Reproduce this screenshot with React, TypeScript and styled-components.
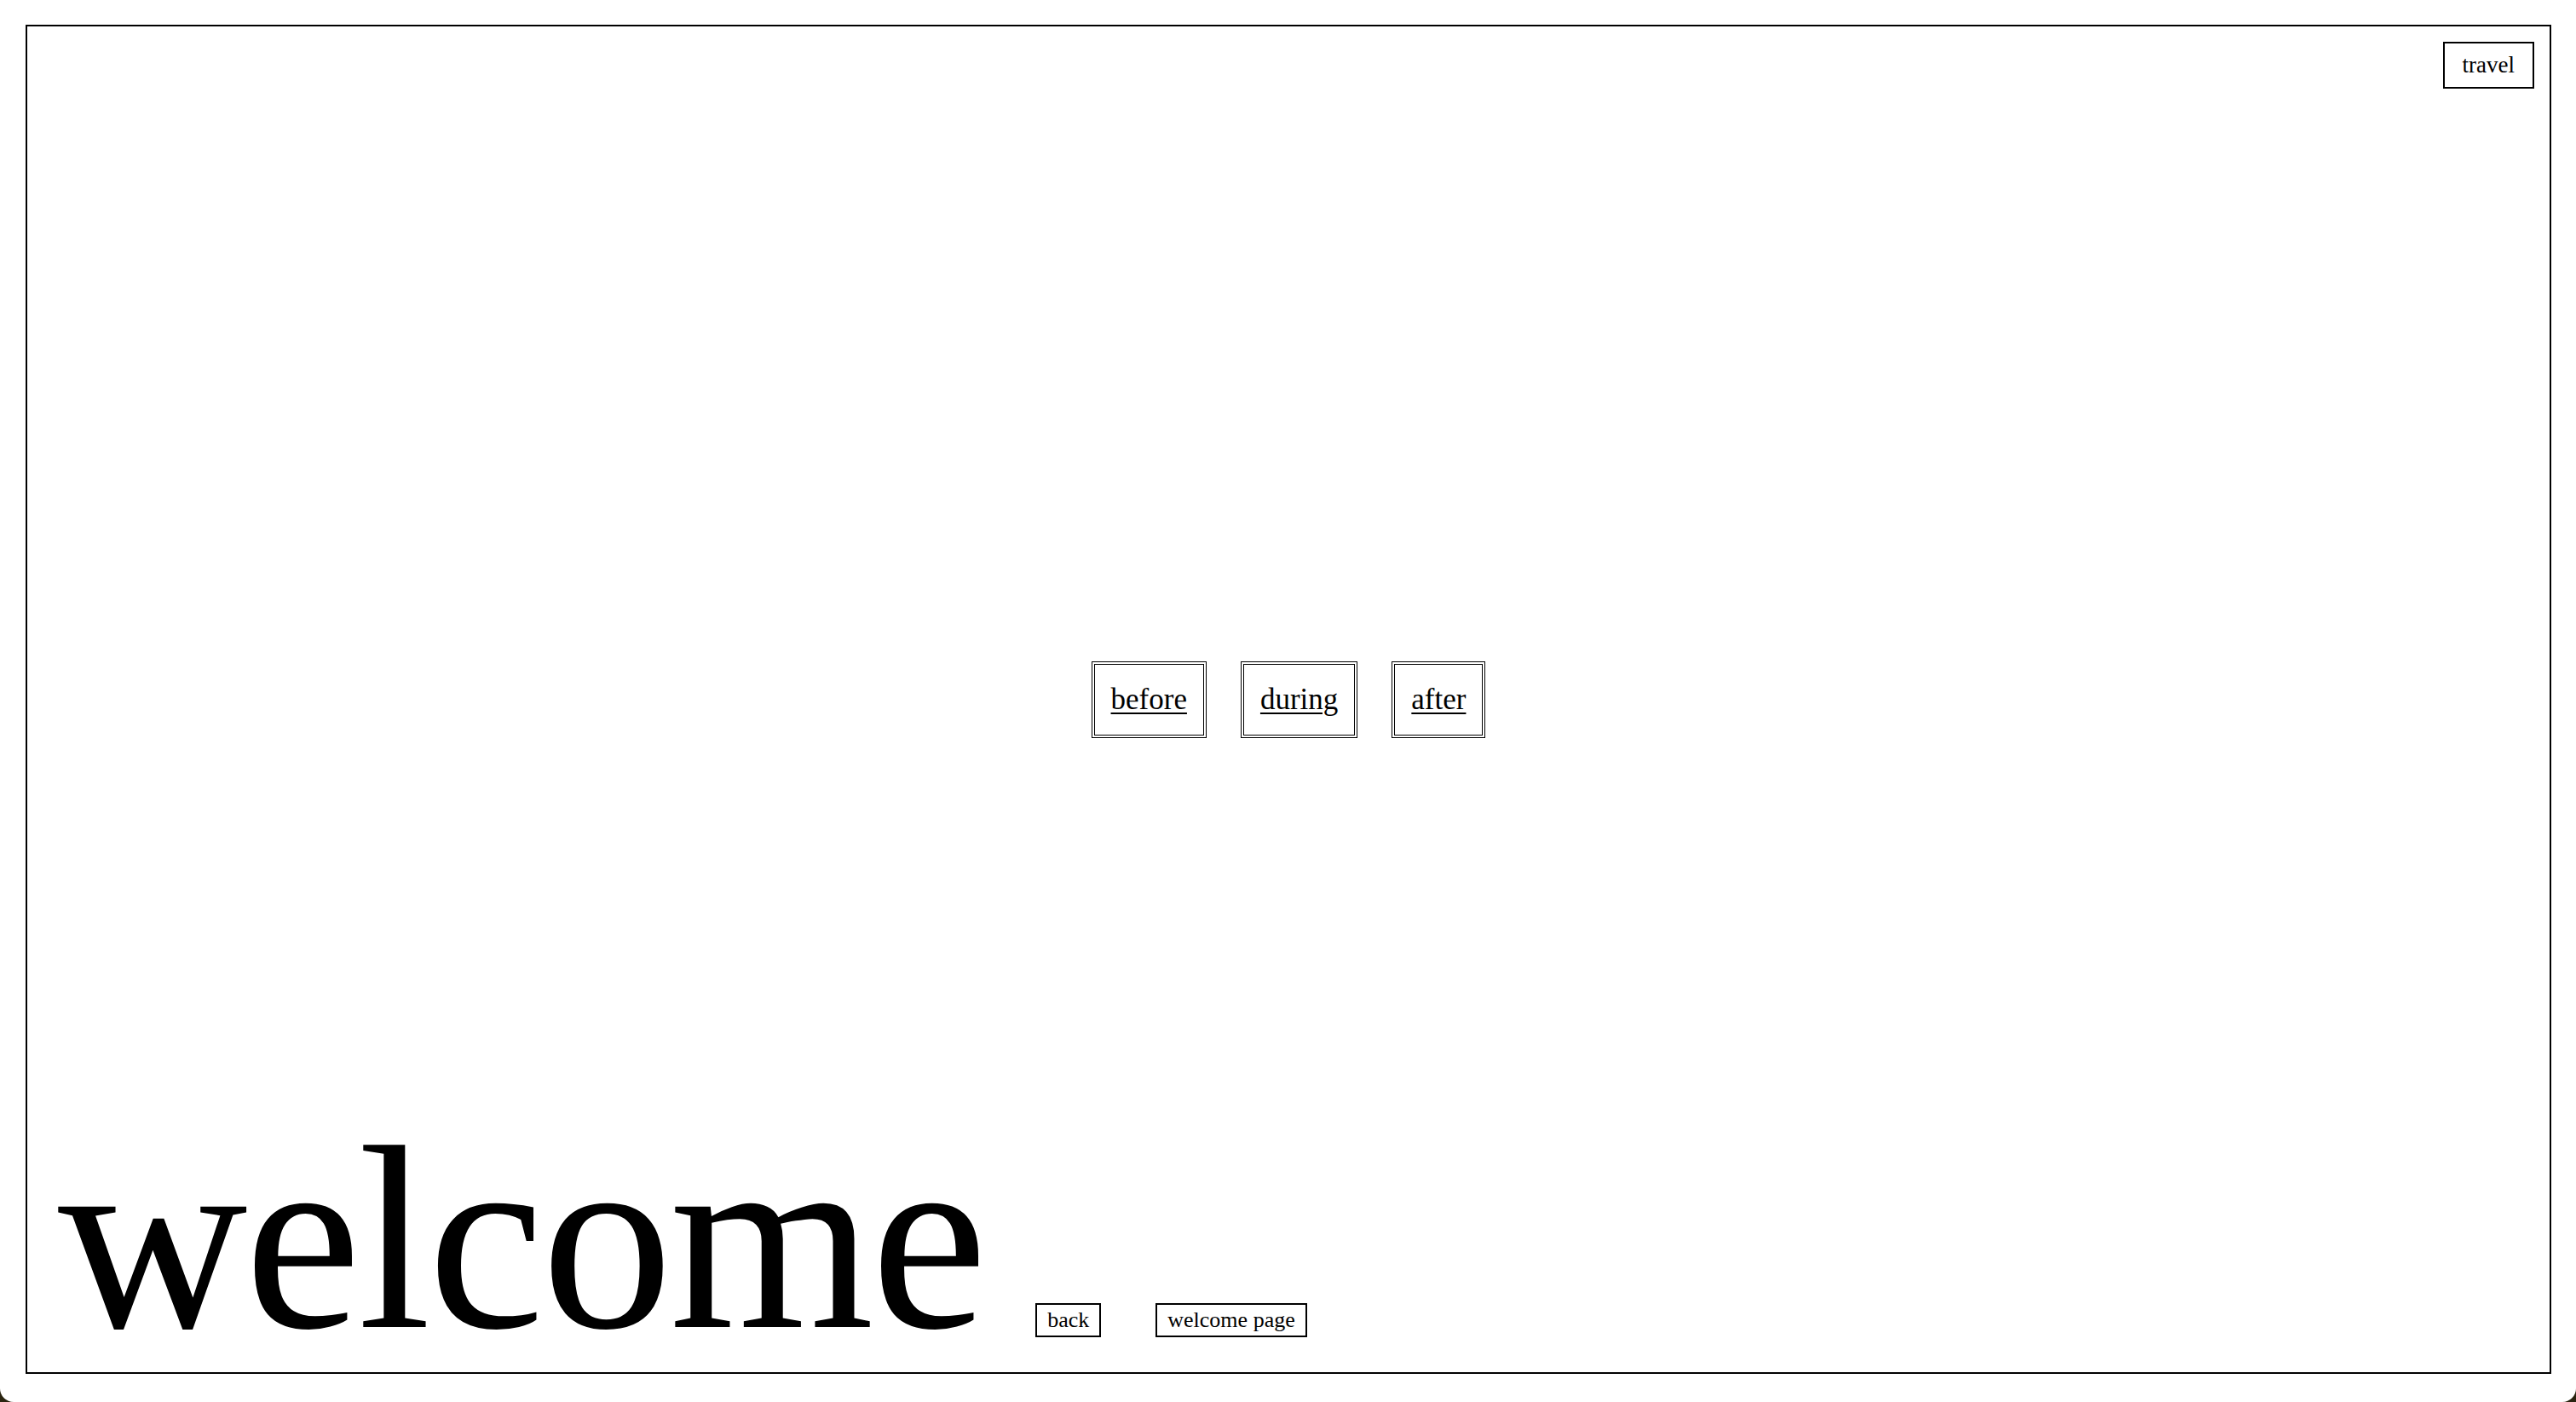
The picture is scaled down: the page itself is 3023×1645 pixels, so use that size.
import React from "react";
import styled, { createGlobalStyle } from "styled-components";

const GlobalStyle = createGlobalStyle`
  html {
    background: #2a2410;
  }
  body {
    margin: 0;
    background: #ffffff;
    border-radius: 0 0 16px 16px;
    font-family: "Liberation Serif", "Times New Roman", serif;
    color: #000000;
  }
`;

const navItems = ["before", "during", "after"];

const App: React.FC = () => {
  return (
    <>
      <GlobalStyle />
      <Page>
        <Frame>
          <TopBar>
            <TravelButton>travel</TravelButton>
          </TopBar>
          <Nav>
            {navItems.map(item => (
              <NavButton key={item} href="#">
                {item}
              </NavButton>
            ))}
          </Nav>
          <BottomRow>
            <Title>welcome</Title>
            <SmallButtons>
              <SmallButton>back</SmallButton>
              <SmallButton>welcome page</SmallButton>
            </SmallButtons>
          </BottomRow>
        </Frame>
      </Page>
    </>
  );
};

const Page = styled.div`
  box-sizing: border-box;
  height: 100vh;
  padding: 29px 29px 33px 30px;
  display: flex;
`;

const Frame = styled.main`
  flex: 1;
  border: 2px solid #000;
  display: grid;
  grid-template-rows: 1fr auto 1fr;
  min-height: 0;
`;

const TopBar = styled.header`
  display: flex;
  justify-content: flex-end;
  align-items: flex-start;
  padding: 18px 18px 0 0;
`;

const TravelButton = styled.div`
  border: 2px solid #000;
  padding: 10px 21px;
  font-size: 27px;
`;

const Nav = styled.nav`
  display: flex;
  justify-content: center;
  gap: 40px;
`;

const NavButton = styled.a`
  border: 4px double #000;
  padding: 21px 19px;
  font-size: 35px;
  color: #000;
  text-decoration: underline;
  text-decoration-thickness: 2px;
  text-underline-offset: 4px;
`;

const BottomRow = styled.footer`
  align-self: end;
  display: flex;
  align-items: baseline;
  padding: 0 0 41px 36px;
`;

const Title = styled.h1`
  margin: 0;
  font-weight: 400;
  font-size: 308px;
  letter-spacing: -3.5px;
  line-height: 0.7;
`;

const SmallButtons = styled.div`
  display: flex;
  align-items: baseline;
  gap: 64px;
  margin-left: 60px;
`;

const SmallButton = styled.div`
  border: 2px solid #000;
  padding: 3px 12px;
  font-size: 26px;
  line-height: 30px;
`;

export default App;
